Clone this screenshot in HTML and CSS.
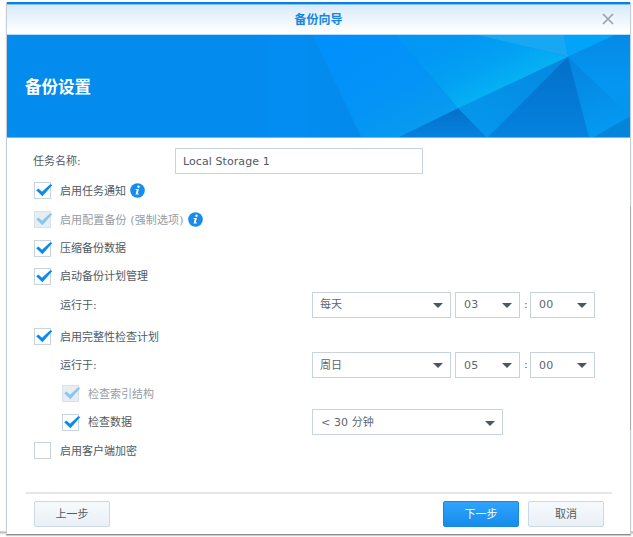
FILE: index.html
```html
<!DOCTYPE html>
<html lang="zh-CN">
<head>
<meta charset="utf-8">
<title>备份向导</title>
<link rel="stylesheet" href="styles.css">
</head>
<body>
<svg class="defs" aria-hidden="true">
  <symbol id="tick" viewBox="0 0 19 17"><path d="M2.2 8.2 4.4 6.5 8 9.8 16.2 2.2 18.4 2.9 8.4 14.2Z"/></symbol>
  <symbol id="info" viewBox="0 0 15 15"><circle cx="7.5" cy="7.5" r="7.3" fill="#168ced"/><circle cx="8.5" cy="3.8" r="1.2" fill="#fff"/><path d="M5.8 6H8.9L7.7 10.5H8.9L8.7 11.6H5.5L6.7 7H5.5Z" fill="#fff"/></symbol>
</svg>
<div class="window">
  <header class="titlebar">
    <h1>备份向导</h1>
    <svg class="close" viewBox="0 0 12 12"><path d="M1 1 11 11M11 1 1 11"/></svg>
  </header>
  <section class="banner">
    <svg class="facets" viewBox="0 0 624 103" preserveAspectRatio="none">
      <defs>
        <linearGradient id="g1" gradientUnits="userSpaceOnUse" x1="340" y1="0" x2="400" y2="103"><stop offset="0" stop-color="#0090fc"/><stop offset=".6" stop-color="#0493f6"/><stop offset="1" stop-color="#089bef"/></linearGradient>
        <linearGradient id="g2" gradientUnits="userSpaceOnUse" x1="450" y1="0" x2="485" y2="70"><stop offset="0" stop-color="#0296f5"/><stop offset=".5" stop-color="#03a1f3"/><stop offset="1" stop-color="#06b6f3"/></linearGradient>
        <linearGradient id="g3" x1="1" y1="0" x2=".2" y2="1"><stop offset="0" stop-color="#0487df"/><stop offset="1" stop-color="#0498ee"/></linearGradient>
        <linearGradient id="g4" x1=".5" y1="0" x2=".5" y2="1"><stop offset="0" stop-color="#046fc9"/><stop offset="1" stop-color="#0482df"/></linearGradient>
        <linearGradient id="g5" gradientUnits="userSpaceOnUse" x1="565" y1="24" x2="590" y2="95"><stop offset="0" stop-color="#0484de"/><stop offset="1" stop-color="#0498f1"/></linearGradient>
        <linearGradient id="g6" x1="0" y1="0" x2="1" y2="0"><stop offset="0" stop-color="#038bee"/><stop offset=".35" stop-color="#038df3"/><stop offset="1" stop-color="#038aea"/></linearGradient>
        <linearGradient id="g7" x1="0" y1="0" x2="0" y2="1"><stop offset="0" stop-color="#048ae6"/><stop offset=".6" stop-color="#0496f2"/><stop offset="1" stop-color="#0495ee"/></linearGradient>
      </defs>
      <path d="M0 0H624V103H0Z" fill="#038bee"/>
      <path d="M240 0H306L355 103H240Z" fill="url(#g6)"/>
      <path d="M306 0H389L452 74 393 103H355Z" fill="url(#g1)"/>
      <path d="M389 0H471L562 22 452 74Z" fill="url(#g2)"/>
      <path d="M471 0H558L562 22Z" fill="#17a7f3"/>
      <path d="M558 0H609L562 22Z" fill="#00a5f9"/>
      <path d="M452 74 480 103H393Z" fill="url(#g4)"/>
      <path d="M562 22 482 103H480L452 74Z" fill="url(#g3)"/>
      <path d="M562 22 583 103H482Z" fill="url(#g4)"/>
      <path d="M562 22 624 82V84L590 103H583Z" fill="url(#g5)"/>
      <path d="M609 0H624V82L562 22Z" fill="url(#g7)"/>
      <path d="M624 82V103H588Z" fill="#0584dc"/>
    </svg>
    <h2>备份设置</h2>
  </section>
  <main class="form">
    <div class="row tall"><span class="label">任务名称:</span><div class="field name">Local Storage 1</div></div>
    <div class="row"><span class="box"><svg><use href="#tick"/></svg></span><span class="text">启用任务通知</span><svg class="info"><use href="#info"/></svg></div>
    <div class="row off"><span class="box"><svg><use href="#tick"/></svg></span><span class="text forced">启用配置备份 (强制选项)</span><svg class="info"><use href="#info"/></svg></div>
    <div class="row short"><span class="box"><svg><use href="#tick"/></svg></span><span class="text">压缩备份数据</span></div>
    <div class="row short"><span class="box"><svg><use href="#tick"/></svg></span><span class="text">启动备份计划管理</span></div>
    <div class="row schedule"><span class="label sub">运行于:</span>
      <div class="field day">每天<i></i></div><div class="field time">03<i></i></div><span class="colon">:</span><div class="field time">00<i></i></div></div>
    <div class="row gap"><span class="box"><svg><use href="#tick"/></svg></span><span class="text">启用完整性检查计划</span></div>
    <div class="row short schedule"><span class="label sub">运行于:</span>
      <div class="field day">周日<i></i></div><div class="field time">05<i></i></div><span class="colon">:</span><div class="field time">00<i></i></div></div>
    <div class="row nested off"><span class="box"><svg><use href="#tick"/></svg></span><span class="text">检查索引结构</span></div>
    <div class="row short nested"><span class="box"><svg><use href="#tick"/></svg></span><span class="text check-data">检查数据</span><div class="field duration">&lt; 30 分钟<i></i></div></div>
    <div class="row"><span class="box"></span><span class="text">启用客户端加密</span></div>
    <div class="scroll"></div>
  </main>
  <footer class="actions">
    <button>上一步</button>
    <button class="primary">下一步</button>
    <button>取消</button>
  </footer>
</div>
</body>
</html>
```
FILE: styles.css
```css
* { box-sizing: border-box; }
body {
  margin: 0;
  height: 537px;
  padding: 2px 2px 0 6px;
  overflow: hidden;
  background: linear-gradient(#fff 531px, #a9a9a9 532px, #d5d5d5 533px, #fff 535px);
  color: #505a64;
  font: 11px/16px "DejaVu Sans", "Noto Sans CJK SC", sans-serif;
}
h1, h2 { margin: 0; }
.defs { position: absolute; width: 0; height: 0; }
.window {
  height: 533px;
  display: flex;
  flex-direction: column;
  background: #fff;
  border: 1px solid #c8cdd1;
  border-top: 0;
  border-bottom-color: #8d8d8d;
  box-shadow: 0 1px 1px #ccc;
}
.titlebar {
  height: 33px;
  flex: none;
  display: grid;
  grid-template-columns: 1fr auto 1fr;
  align-items: center;
  border-top: 2px solid #0782e4;
  border-bottom: 1px solid #b5ddf8;
  background: linear-gradient(#d6eafa, #fff 95%);
  box-shadow: inset 0 1px #84c0ef;
}
.titlebar h1 { grid-column: 2; font-size: 12px; line-height: 18px; color: #1685e2; padding-top: 1px; }
.close { width: 12px; height: 12px; justify-self: end; margin-right: 16px; fill: none; stroke: #9ba3aa; stroke-width: 1.7; }
.banner {
  height: 103px;
  flex: none;
  display: grid;
  align-items: center;
  border-bottom: 1px solid #6cbcf2;
  background: #038bee;
}
.banner > * { grid-area: 1 / 1; }
.facets { width: 100%; height: 102px; display: block; }
.banner h2 { z-index: 1; padding-left: 18px; padding-top: 3px; font-size: 16.5px; line-height: 24px; color: #fff; }
.form { position: relative; height: 354px; flex: none; padding: 8px 0 0 27px; }
.row { height: 29px; display: flex; align-items: center; white-space: nowrap; }
.tall { height: 30px; }
.short { height: 28px; }
.gap { margin-top: 3px; }
.nested { padding-left: 28px; }
.label { width: 142px; margin-left: -1px; padding-top: 2px; }
.label.sub { width: 279px; padding-left: 27px; }
.box { width: 17px; height: 17px; flex: none; border: 1px solid #c9d4df; background: #fff; }
.box svg { display: block; width: 19px; height: 17px; margin: -1px; fill: #078bee; }
.text { margin-left: 9px; padding-top: 2px; }
.forced { letter-spacing: .12px; }
.off .text { color: #959ca4; }
.off .box { background: #e8edf2; border-color: #d9e1e9; }
.off .box svg { fill: #87c5f3; }
.info { width: 15px; height: 15px; margin-left: 4px; }
.field {
  height: 26px;
  display: flex;
  align-items: center;
  justify-content: space-between;
  padding: 1px 7px 0 8px;
  border: 1px solid #c7d3df;
  background: #fff;
  color: #5d666f;
}
.field i { border: 5px solid transparent; border-top-color: #4d5761; border-bottom: 0; }
.name { width: 248px; padding-top: 2px; padding-left: 7px; letter-spacing: .08px; color: #505a64; }
.day { width: 139px; margin-right: 4px; padding-left: 7px; }
.time { width: 65px; letter-spacing: .2px; }
.colon { width: 10px; padding-left: 4px; }
.duration { width: 191px; padding-top: 2px; letter-spacing: .1px; }
.check-data { width: 224px; }
.row .label, .row .text { flex-shrink: 0; }
.scroll { position: absolute; right: -1px; top: 68px; width: 1px; height: 224px; background: #aaa; }
.actions {
  display: flex;
  gap: 9px;
  margin: 0 18px 0 19px;
  padding: 7px 8px 0 8px;
  border-top: 2px solid #e6e6e6;
}
button {
  width: 76px;
  height: 26px;
  padding: 2px 0 0;
  border: 1px solid #ccd8e3;
  border-radius: 2px;
  background: linear-gradient(#f6fafd, #e9f0f6);
  color: #505a64;
  font: inherit;
}
.primary { margin-left: auto; border-color: #1589e0; background: linear-gradient(#30a4fc, #168ceb); color: #fff; }
```
